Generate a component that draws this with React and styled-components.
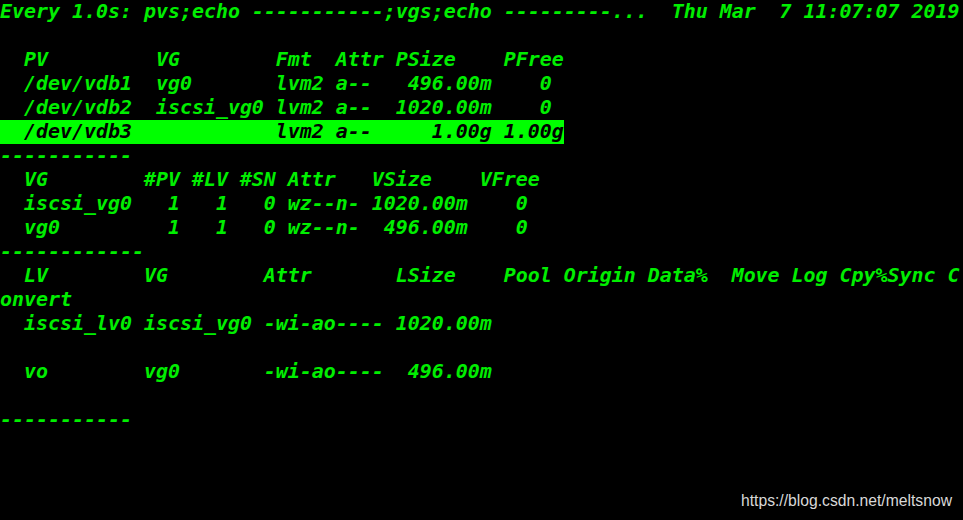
import React from 'react';
import styled, { createGlobalStyle } from 'styled-components';

const GlobalStyle = createGlobalStyle`
  html, body {
    margin: 0;
    padding: 0;
    background: #000;
  }
`;

const Screen = styled.div`
  position: relative;
  width: 963px;
  height: 520px;
  background: #000;
  overflow: hidden;
`;

const Terminal = styled.div`
  display: flex;
  flex-direction: column;
  font-family: "DejaVu Sans Mono", "Liberation Mono", monospace;
  font-weight: bold;
  font-style: oblique;
  font-size: 19.93px;
  line-height: 24px;
  color: #00ee00;
`;

const Line = styled.div`
  height: 24px;
  white-space: pre;
`;

const Selected = styled.span`
  display: inline-block;
  background: #00ff00;
  color: #000;
`;

const Watermark = styled.div`
  position: absolute;
  right: 11px;
  bottom: 10px;
  font-family: "Liberation Sans", Arial, sans-serif;
  font-size: 15.7px;
  color: #d8d8d8;
`;

const lines = [
  'Every 1.0s: pvs;echo -----------;vgs;echo ---------...  Thu Mar  7 11:07:07 2019',
  '',
  '  PV         VG        Fmt  Attr PSize    PFree',
  '  /dev/vdb1  vg0       lvm2 a--   496.00m    0 ',
  '  /dev/vdb2  iscsi_vg0 lvm2 a--  1020.00m    0 ',
  { selected: '  /dev/vdb3            lvm2 a--     1.00g 1.00g' },
  '-----------',
  '  VG        #PV #LV #SN Attr   VSize    VFree',
  '  iscsi_vg0   1   1   0 wz--n- 1020.00m    0 ',
  '  vg0         1   1   0 wz--n-  496.00m    0 ',
  '------------',
  '  LV        VG        Attr       LSize    Pool Origin Data%  Move Log Cpy%Sync C',
  'onvert',
  '  iscsi_lv0 iscsi_vg0 -wi-ao---- 1020.00m',
  '',
  '  vo        vg0       -wi-ao----  496.00m',
  '',
  '-----------',
];

export default function App() {
  return (
    <Screen>
      <GlobalStyle />
      <Terminal>
        {lines.map((l, i) => (
          <Line key={i}>
            {typeof l === 'string' ? l : <Selected>{l.selected}</Selected>}
          </Line>
        ))}
      </Terminal>
      <Watermark>https://blog.csdn.net/meltsnow</Watermark>
    </Screen>
  );
}
